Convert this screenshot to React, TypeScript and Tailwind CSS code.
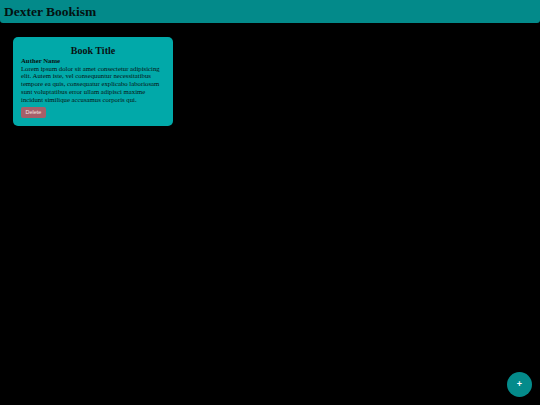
import React from "react";

export default function App() {
  return (
    <div className="min-h-screen w-full bg-black" style={{ fontFamily: '"Liberation Serif", "Times New Roman", serif' }}>
      <header className="h-[23px] bg-[#038a8a] rounded-b-[3px] flex items-center px-[4px]">
        <h1 className="text-[13.5px] font-bold text-[#031212] leading-none">Dexter Bookism</h1>
      </header>
      <main className="pt-[14px] pl-[13px]">
        <div className="w-[160px] bg-[#01a9a9] rounded-[5px] px-[8px] pt-[8px] pb-[8px] text-[#081212]">
          <h2 className="text-[10px] font-bold text-center leading-[12px]">Book Title</h2>
          <h3 className="text-[6.75px] font-bold leading-[7.7px]">Auther Name</h3>
          <p className="text-[6.75px] leading-[7.7px]">
            Lorem ipsum dolor sit amet consectetur adipisicing elit. Autem iste, vel consequuntur necessitatibus tempore ea quis, consequatur explicabo laboriosam sunt voluptatibus error ullam adipisci maxime incidunt similique accusamus corporis qui.
          </p>
          <button
            className="mt-[4px] h-[11px] px-[4.5px] bg-[#a65f69] rounded-[2px] text-[5.5px] text-[#f2e4e4] leading-none flex items-center"
            style={{ fontFamily: '"Liberation Sans", Arial, sans-serif' }}
          >
            Delete
          </button>
        </div>
      </main>
      <button
        className="fixed bottom-[8px] right-[8px] w-[25px] h-[25px] rounded-full bg-[#048b8b] text-white text-[9px] font-bold leading-none flex items-center justify-center"
        style={{ fontFamily: '"Liberation Sans", Arial, sans-serif' }}
      >
        +
      </button>
    </div>
  );
}
